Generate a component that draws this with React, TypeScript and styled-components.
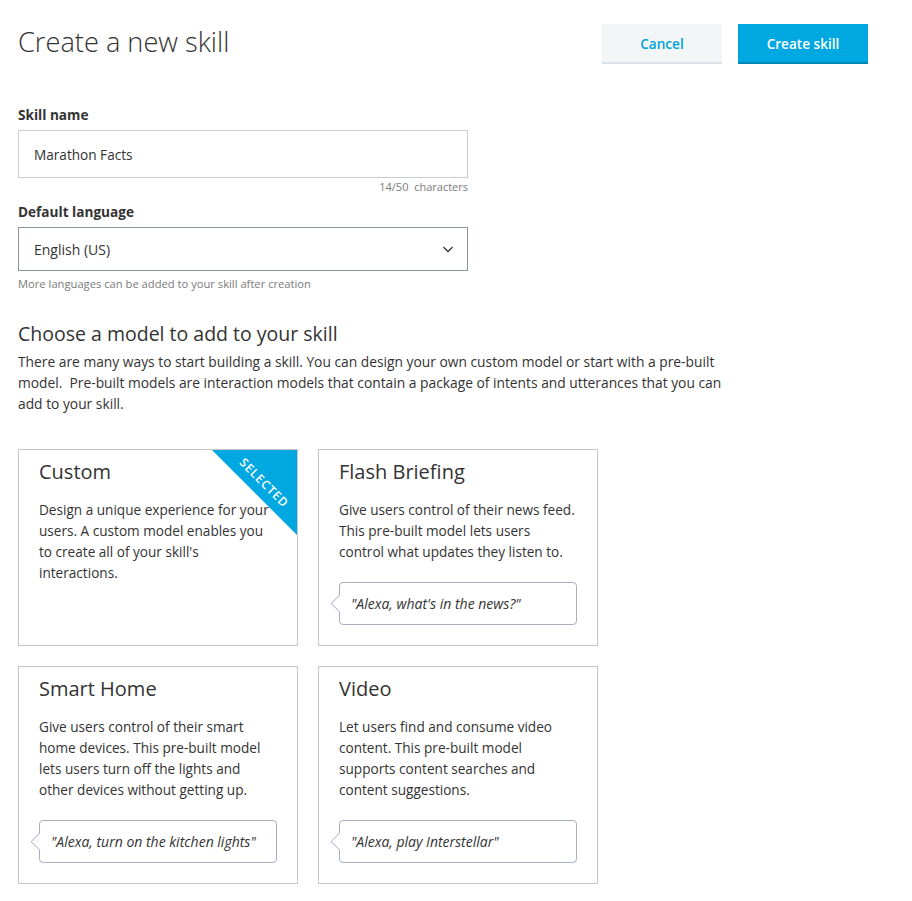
import React from "react";
import styled, { createGlobalStyle } from "styled-components";

const Global = createGlobalStyle`
  html, body { margin: 0; padding: 0; background: #ffffff; }
  body { font-family: "Open Sans", "Noto Sans", sans-serif; color: #333; }
  * { box-sizing: border-box; }
`;

const Page = styled.div`
  width: 912px;
  padding: 0 44px 20px 18px;
`;

const Header = styled.div`
  display: flex;
  align-items: flex-start;
  justify-content: space-between;
  padding-top: 24px;
  height: 98px;
`;

const Title = styled.h1`
  margin: 2px 0 0 0;
  font-size: 27.2px;
  font-weight: 300;
  color: #333;
  line-height: 32px;
`;

const Actions = styled.div`
  display: flex;
  gap: 16px;
`;

const Button = styled.button<{ $primary?: boolean }>`
  height: 40px;
  padding: 0;
  width: ${(p) => (p.$primary ? "130px" : "120px")};
  border: none;
  border-bottom: 2px solid ${(p) => (p.$primary ? "#0087b6" : "#d9e4ea")};
  background: ${(p) => (p.$primary ? "#00a8e1" : "#f2f6f7")};
  color: ${(p) => (p.$primary ? "#ffffff" : "#00a2da")};
  font-family: inherit;
  font-size: 13.6px;
  font-weight: 600;
  cursor: pointer;
`;

const Field = styled.div`
  width: 450px;
  display: flex;
  flex-direction: column;
`;

const Label = styled.label<{ $top: number }>`
  margin-top: ${(p) => p.$top}px;
  font-size: 13.6px;
  font-weight: 700;
  color: #333;
  line-height: 18px;
  margin-bottom: 6px;
`;

const TextBox = styled.div`
  height: 48px;
  border: 1px solid #c9cdd1;
  display: flex;
  align-items: center;
  padding: 0 15px;
  font-size: 13.6px;
  color: #333;
`;

const Counter = styled.div`
  text-align: right;
  font-size: 11px;
  color: #7b7b7b;
  margin-top: 2px;
  line-height: 14px;
`;

const SelectBox = styled.div`
  height: 44px;
  border: 1px solid #8c9797;
  display: flex;
  align-items: center;
  justify-content: space-between;
  padding: 0 12px 0 15px;
  font-size: 14px;
  color: #333;
`;

const Hint = styled.div`
  font-size: 11.2px;
  color: #7b7b7b;
  margin-top: 6px;
  line-height: 14px;
`;

const SectionTitle = styled.h2`
  margin: 30px 0 0 0;
  font-size: 19.5px;
  font-weight: 400;
  line-height: 26px;
  color: #333;
`;

const Intro = styled.p`
  margin: 4px 0 0 0;
  width: 712px;
  font-size: 13.8px;
  line-height: 21px;
  color: #333;
`;

const Grid = styled.div`
  margin-top: 35px;
  display: grid;
  grid-template-columns: 280px 280px;
  column-gap: 20px;
  row-gap: 20px;
`;

const Card = styled.div`
  position: relative;
  overflow: hidden;
  border: 1px solid #c8c8c8;
  padding: 9px 20px 20px 20px;
  display: flex;
  flex-direction: column;
  align-items: flex-start;
`;

const CardTitle = styled.h3`
  margin: 0;
  font-size: 20px;
  font-weight: 400;
  line-height: 26px;
  color: #333;
`;

const CardText = styled.p`
  margin: 14px 0 0 0;
  font-size: 13.6px;
  line-height: 21px;
  color: #333;
`;

const Line = styled.span`
  display: block;
  white-space: nowrap;
`;

const Bubble = styled.div`
  position: relative;
  margin-top: 20px;
  width: 238px;
  height: 43px;
  border: 1px solid #a9adc0;
  border-radius: 4px;
  display: flex;
  align-items: center;
  padding: 0 11px;
  font-size: 14px;
  font-style: italic;
  color: #333;
  white-space: nowrap;
  &::before {
    content: "";
    position: absolute;
    left: -7px;
    top: 14px;
    width: 12px;
    height: 12px;
    background: #fff;
    border-left: 1px solid #a9adc0;
    border-bottom: 1px solid #a9adc0;
    transform: rotate(45deg);
    border-radius: 0 0 0 2px;
  }
`;

const Ribbon = styled.div`
  position: absolute;
  top: 0;
  right: 0;
  width: 85px;
  height: 85px;
  background: #00a8e1;
  clip-path: polygon(0 0, 100% 0, 100% 100%);
`;

const RibbonText = styled.span`
  position: absolute;
  top: 26px;
  right: -17px;
  width: 100px;
  text-align: center;
  transform: rotate(45deg);
  color: #fff;
  font-size: 12px;
  font-weight: 600;
  letter-spacing: 0.9px;
  line-height: 14px;
`;

const Chevron = () => (
  <svg width="14" height="14" viewBox="0 0 14 14" fill="none">
    <path d="M2.5 5 L7 9.5 L11.5 5" stroke="#333" strokeWidth="1.3" />
  </svg>
);

const models = [
  {
    title: "Custom",
    lines: [
      "Design a unique experience for your",
      "users. A custom model enables you",
      "to create all of your skill's",
      "interactions.",
    ],
    selected: true,
  },
  {
    title: "Flash Briefing",
    lines: [
      "Give users control of their news feed.",
      "This pre-built model lets users",
      "control what updates they listen to.",
    ],
    quote: "\"Alexa, what's in the news?\"",
  },
  {
    title: "Smart Home",
    lines: [
      "Give users control of their smart",
      "home devices. This pre-built model",
      "lets users turn off the lights and",
      "other devices without getting up.",
    ],
    quote: "\"Alexa, turn on the kitchen lights\"",
  },
  {
    title: "Video",
    lines: [
      "Let users find and consume video",
      "content. This pre-built model",
      "supports content searches and",
      "content suggestions.",
    ],
    quote: "\"Alexa, play Interstellar\"",
  },
];

export default function App() {
  return (
    <>
      <Global />
      <Page>
        <Header>
          <Title>Create a new skill</Title>
          <Actions>
            <Button>Cancel</Button>
            <Button $primary>Create skill</Button>
          </Actions>
        </Header>

        <Field>
          <Label $top={8}>Skill name</Label>
          <TextBox>Marathon Facts</TextBox>
          <Counter>14/50&nbsp; characters</Counter>
          <Label $top={9}>Default language</Label>
          <SelectBox>
            English (US)
            <Chevron />
          </SelectBox>
          <Hint>More languages can be added to your skill after creation</Hint>
        </Field>

        <SectionTitle>Choose a model to add to your skill</SectionTitle>
        <Intro>
          There are many ways to start building a skill. You can design your own custom model or start with a pre-built
          model.&nbsp; Pre-built models are interaction models that contain a package of intents and utterances that you can
          add to your skill.
        </Intro>

        <Grid>
          {models.map((m) => (
            <Card key={m.title}>
              {m.selected && (
                <Ribbon>
                  <RibbonText>SELECTED</RibbonText>
                </Ribbon>
              )}
              <CardTitle>{m.title}</CardTitle>
              <CardText>
                {m.lines.map((l) => (
                  <Line key={l}>{l}</Line>
                ))}
              </CardText>
              {m.quote && <Bubble>{m.quote}</Bubble>}
            </Card>
          ))}
        </Grid>
      </Page>
    </>
  );
}
